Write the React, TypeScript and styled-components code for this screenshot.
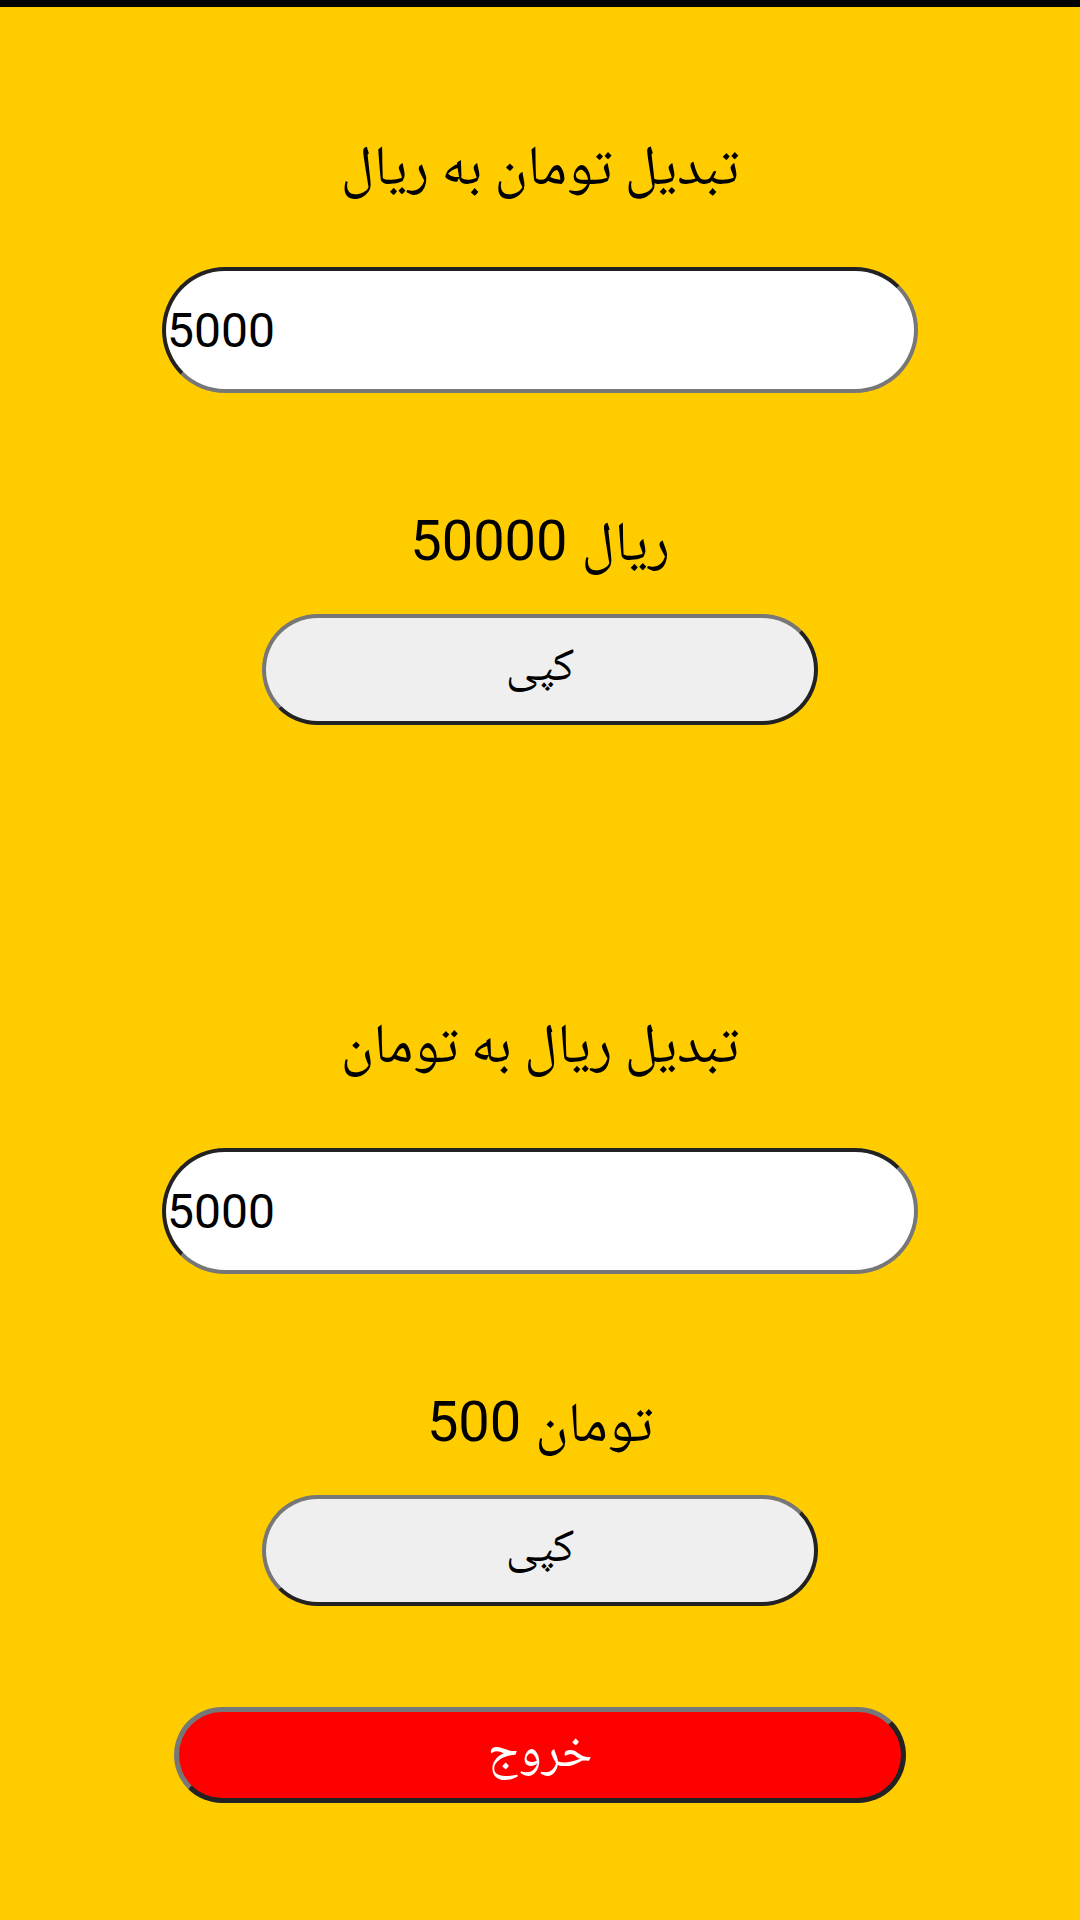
import React from "react";
import styled, { createGlobalStyle } from "styled-components";

const GlobalStyle = createGlobalStyle`
  html, body { margin: 0; padding: 0; background: #ffcc00; }
  #root { min-height: 1920px; }
  * { box-sizing: border-box; }
`;

const Page = styled.div`
  width: 1080px;
  min-height: 1920px;
  background: #ffcc00;
  display: flex;
  flex-direction: column;
  align-items: center;
  font-family: Roboto, "Noto Naskh Arabic", sans-serif;
  color: #000;
`;

const StatusBar = styled.div`
  align-self: stretch;
  height: 7px;
  background: #000;
`;

const Section = styled.section<{ $top: number; $gap: number }>`
  margin-top: ${(p) => p.$top}px;
  display: flex;
  flex-direction: column;
  align-items: center;
  width: 100%;
  --gap: ${(p) => p.$gap}px;
`;

const Title = styled.h1`
  margin: 0;
  height: 80px;
  line-height: 80px;
  font-family: "Noto Naskh Arabic", serif;
  font-weight: 400;
  font-size: 56px;
  text-align: center;
  white-space: nowrap;
`;

const AmountInput = styled.input`
  margin-top: var(--gap);
  width: 756px;
  height: 126px;
  border-radius: 63px;
  border: 4px solid;
  border-color: #222 #777 #777 #222;
  background: #fff;
  padding: 0 0 0 1px;
  font-family: Roboto, sans-serif;
  font-size: 48px;
  color: #000;
  outline: none;
`;

const Result = styled.div`
  margin-top: 108px;
  height: 80px;
  line-height: 80px;
  font-size: 56px;
  white-space: nowrap;
  text-align: center;
`;

const Pill = styled.button<{ $variant: "copy" | "exit" }>`
  display: flex;
  align-items: center;
  justify-content: center;
  border-style: solid;
  border-color: #777 #222 #222 #777;
  font-family: "Noto Naskh Arabic", serif;
  cursor: pointer;
  padding: 0;
  ${(p) =>
    p.$variant === "copy"
      ? `
    margin-top: 33px;
    width: 556px;
    height: 111px;
    border-radius: 56px;
    border-width: 4px;
    background: #efefef;
    color: #000;
    font-size: 47px;
  `
      : `
    margin-top: 101px;
    width: 732px;
    height: 96px;
    border-radius: 48px;
    border-width: 5px;
    background: #ff0000;
    color: #fff;
    font-size: 49px;
  `}
`;

const Converter = ({
  top,
  gap,
  title,
  value,
  result,
}: {
  top: number;
  gap: number;
  title: string;
  value: string;
  result: string;
}) => (
  <Section $top={top} $gap={gap}>
    <Title>{title}</Title>
    <AmountInput defaultValue={value} />
    <Result>{result}</Result>
    <Pill $variant="copy">کپی</Pill>
  </Section>
);

export default function App() {
  return (
    <>
      <GlobalStyle />
      <Page>
        <StatusBar />
        <Converter top={125} gap={55} title="تبدیل تومان به ریال" value="5000" result="50000 ریال" />
        <Converter top={285} gap={58} title="تبدیل ریال به تومان" value="5000" result="500 تومان" />
        <Pill $variant="exit">خروج</Pill>
      </Page>
    </>
  );
}
